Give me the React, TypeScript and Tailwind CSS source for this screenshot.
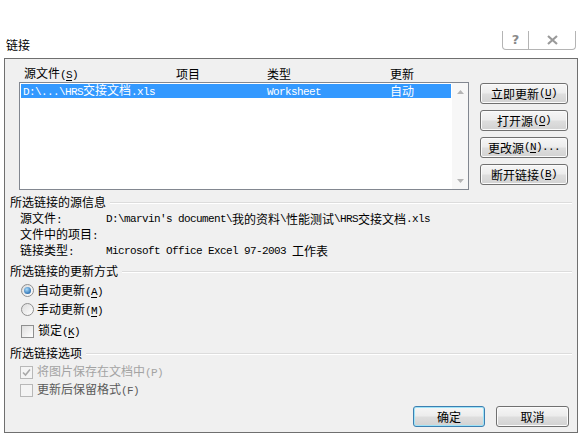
import React from "react";
import clsx from "clsx";

const CJK = /([\u2E80-\u9FFF\uF900-\uFAFF\uFF00-\uFFEF]+)/;

// SimSun-like mix: CJK full width 12px, latin half width 6px
function Mix({ text }: { text: string }) {
  return (
    <>
      {text.split(CJK).map((part, i) =>
        part === "" ? null : CJK.test(part) ? (
          <span key={i} className="font-['Noto_Sans_CJK_SC',sans-serif] text-[12px]">
            {part}
          </span>
        ) : (
          <span key={i} className="font-['Liberation_Mono',monospace] text-[11px] tracking-[-0.6px] whitespace-pre">
            {part}
          </span>
        )
      )}
    </>
  );
}

function Acc({ label, k, tail = "" }: { label: string; k: string; tail?: string }) {
  return (
    <>
      <Mix text={label} />
      <span className="font-['Liberation_Mono',monospace] text-[11px] tracking-[-0.6px]">
        (<span className="underline underline-offset-2">{k}</span>){tail}
      </span>
    </>
  );
}

function Btn({
  children,
  primary,
  className,
}: {
  children: React.ReactNode;
  primary?: boolean;
  className?: string;
}) {
  return (
    <div
      className={clsx(
        "flex h-[21px] items-center justify-center rounded-[3px] border leading-none text-black",
        "bg-[linear-gradient(#f6f6f6_0%,#ececec_48%,#dedede_52%,#d2d2d2_100%)]",
        primary
          ? "border-[#3c7fb1] shadow-[inset_0_0_0_1px_#9fe3f7]"
          : "border-[#707070] shadow-[inset_0_0_0_1px_#fbfbfb]",
        className
      )}
    >
      {children}
    </div>
  );
}

function GroupHead({ text }: { text: string }) {
  return (
    <div className="flex h-[14px] items-center pl-[5px] pr-[5px] leading-none">
      <span className="shrink-0">
        <Mix text={text} />
      </span>
      <div className="ml-[4px] flex-1 border-t border-[#dcdcdc] shadow-[0_1px_0_#ffffff]" />
    </div>
  );
}

function Radio({ checked }: { checked?: boolean }) {
  return (
    <div className="flex h-[13px] w-[13px] items-center justify-center rounded-full border border-[#8f8f8f] bg-[linear-gradient(135deg,#dcdcdc,#ffffff)]">
      {checked && (
        <div className="h-[7px] w-[7px] rounded-full bg-[radial-gradient(circle_at_40%_35%,#a9dcfb,#2c6fb1_75%)]" />
      )}
    </div>
  );
}

function Check({ checked, disabled }: { checked?: boolean; disabled?: boolean }) {
  return (
    <div
      className={clsx(
        "flex h-[13px] w-[13px] items-center justify-center border",
        disabled
          ? "border-[#b8b8b8] bg-[#f4f4f4]"
          : "border-[#8e8f8f] bg-[linear-gradient(135deg,#dedede,#ffffff)]"
      )}
    >
      {checked && (
        <svg width="9" height="9" viewBox="0 0 9 9">
          <path d="M1 4.5 L3.5 7 L8 1.5" fill="none" stroke="#a8a8a8" strokeWidth="1.6" />
        </svg>
      )}
    </div>
  );
}

function Arrow({ up }: { up?: boolean }) {
  return (
    <div className="flex h-[17px] items-center justify-center">
      <svg width="7" height="4" viewBox="0 0 7 4">
        <path d={up ? "M0 4 L3.5 0 L7 4 Z" : "M0 0 L3.5 4 L7 0 Z"} fill="#b5b5b5" />
      </svg>
    </div>
  );
}

export default function App() {
  return (
    <div className="h-[440px] w-[583px] overflow-hidden bg-white text-[12px] text-black">
      {/* title bar */}
      <div className="flex h-[58px] items-start">
        <div className="pl-[6px] pt-[38px] leading-[14px]">
          <Mix text="链接" />
        </div>
        <div className="ml-auto mr-[7px] mt-[31px] flex h-[19px]">
          <div className="flex w-[27px] items-center justify-center rounded-bl-[4px] border border-t-0 border-[#b4b4b4] font-['DejaVu_Sans',sans-serif] text-[13px] font-bold text-[#8a8a8a]">
            ?
          </div>
          <div className="flex w-[47px] items-center justify-center rounded-br-[4px] border border-l-0 border-t-0 border-[#b4b4b4]">
            <svg width="13" height="10" viewBox="0 0 13 10">
              <path d="M2 1 L11 9 M11 1 L2 9" stroke="#9a9a9a" strokeWidth="2.2" />
            </svg>
          </div>
        </div>
      </div>

      {/* dialog body */}
      <div className="ml-[4px] flex h-[375px] w-[574px] flex-col border border-[#6f6f6f] bg-[#f0f0f0]">
        <div className="flex pt-[7px]">
          <div className="ml-[14px] w-[450px]">
            <div className="grid h-[16px] grid-cols-[152px_91px_123px_1fr] items-center pl-[5px] leading-none">
              <span>
                <Acc label="源文件" k="S" />
              </span>
              <span>
                <Mix text="项目" />
              </span>
              <span>
                <Mix text="类型" />
              </span>
              <span>
                <Mix text="更新" />
              </span>
            </div>
            <div className="flex h-[108px] border border-[#828790] bg-white">
              <div className="flex-1 p-[1px]">
                <div className="grid h-[14px] grid-cols-[153px_91px_123px_1fr] items-center bg-[#3399ff] pl-[2px] leading-none text-white">
                  <span>
                    <Mix text="D:\...\HRS交接文档.xls" />
                  </span>
                  <span />
                  <span>
                    <Mix text="Worksheet" />
                  </span>
                  <span>
                    <Mix text="自动" />
                  </span>
                </div>
              </div>
              <div className="flex w-[16px] flex-col justify-between bg-[#f7f7f7]">
                <Arrow up />
                <Arrow />
              </div>
            </div>
          </div>
          <div className="ml-[11px] mt-[17px] flex w-[88px] flex-col gap-[6px]">
            <Btn>
              <Acc label="立即更新" k="U" />
            </Btn>
            <Btn>
              <Acc label="打开源" k="O" />
            </Btn>
            <Btn>
              <Acc label="更改源" k="N" tail="..." />
            </Btn>
            <Btn>
              <Acc label="断开链接" k="B" />
            </Btn>
          </div>
        </div>

        <div className="mt-[5px]">
          <GroupHead text="所选链接的源信息" />
        </div>
        <div className="mt-[2px] pl-[15px] leading-[16px]">
          <div className="flex h-[16px] items-center">
            <span className="w-[86px]">
              <Mix text="源文件:" />
            </span>
            <Mix text="D:\marvin's document\我的资料\性能测试\HRS交接文档.xls" />
          </div>
          <div className="flex h-[16px] items-center">
            <span className="w-[86px]">
              <Mix text="文件中的项目:" />
            </span>
          </div>
          <div className="flex h-[16px] items-center">
            <span className="w-[86px]">
              <Mix text="链接类型:" />
            </span>
            <Mix text="Microsoft Office Excel 97-2003 工作表" />
          </div>
        </div>

        <div className="mt-[5px]">
          <GroupHead text="所选链接的更新方式" />
        </div>
        <div className="mt-[3px] pl-[16px] leading-none">
          <div className="flex h-[19px] items-center gap-[3px]">
            <Radio checked />
            <span>
              <Acc label="自动更新" k="A" />
            </span>
          </div>
          <div className="flex h-[19px] items-center gap-[3px]">
            <Radio />
            <span>
              <Acc label="手动更新" k="M" />
            </span>
          </div>
          <div className="mt-[3px] flex h-[18px] items-center gap-[4px] pl-[-1px]">
            <Check />
            <span>
              <Acc label="锁定" k="K" />
            </span>
          </div>
        </div>

        <div className="mt-[6px]">
          <GroupHead text="所选链接选项" />
        </div>
        <div className="mt-[3px] pl-[15px] leading-none">
          <div className="flex h-[18px] items-center gap-[4px] text-[#a3a3a3]">
            <Check checked disabled />
            <span>
              <Mix text="将图片保存在文档中(P)" />
            </span>
          </div>
          <div className="flex h-[18px] items-center gap-[4px] text-[#5a5a5a]">
            <Check disabled />
            <span>
              <Mix text="更新后保留格式(F)" />
            </span>
          </div>
        </div>

        <div className="mt-[7px] flex justify-end gap-[11px] pr-[8px]">
          <Btn primary className="w-[72px]">
            <Mix text="确定" />
          </Btn>
          <Btn className="w-[73px]">
            <Mix text="取消" />
          </Btn>
        </div>
      </div>
    </div>
  );
}
